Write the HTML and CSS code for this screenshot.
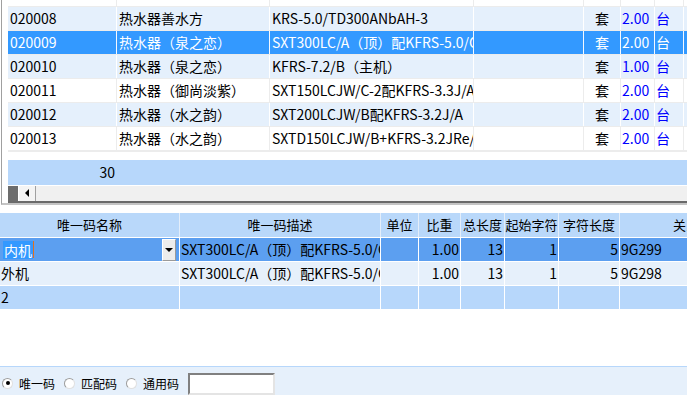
FILE: index.html
```html
<!DOCTYPE html>
<html lang="zh-CN">
<head>
    <meta charset="UTF-8">
    <title>唯一码</title>
    <link rel="stylesheet" href="styles.css">
</head>
<body>
    <div class="top-panel">
        <div class="grid-top">
            <div class="trow cut">
                <span></span><span></span><span></span><span></span><span></span><span></span><span></span><span></span>
            </div>
            <div class="trow alt">
                <span>020008</span><span>热水器善水方</span><span>KRS-5.0/TD300ANbAH-3</span><span></span>
                <span class="c">套</span><span class="num">2.00</span><span class="unit">台</span><span></span>
            </div>
            <div class="trow sel">
                <span>020009</span><span>热水器（泉之恋）</span><span>SXT300LC/A（顶）配KFRS-5.0/C</span><span></span>
                <span class="c">套</span><span class="num">2.00</span><span class="unit">台</span><span></span>
            </div>
            <div class="trow alt">
                <span>020010</span><span>热水器（泉之恋）</span><span>KFRS-7.2/B（主机）</span><span></span>
                <span class="c">套</span><span class="num">1.00</span><span class="unit">台</span><span></span>
            </div>
            <div class="trow">
                <span>020011</span><span>热水器（御尚淡紫）</span><span>SXT150LCJW/C-2配KFRS-3.3J/A-</span><span></span>
                <span class="c">套</span><span class="num">2.00</span><span class="unit">台</span><span></span>
            </div>
            <div class="trow alt">
                <span>020012</span><span>热水器（水之韵）</span><span>SXT200LCJW/B配KFRS-3.2J/A</span><span></span>
                <span class="c">套</span><span class="num">2.00</span><span class="unit">台</span><span></span>
            </div>
            <div class="trow">
                <span>020013</span><span>热水器（水之韵）</span><span>SXTD150LCJW/B+KFRS-3.2JRe/A</span><span></span>
                <span class="c">套</span><span class="num">2.00</span><span class="unit">台</span><span></span>
            </div>
        </div>
        <div class="blank"></div>
        <div class="total-row">
            <span class="total">30</span>
        </div>
        <div class="hscroll">
            <div class="thumb-dark"></div>
            <div class="arrow-btn"><span class="tri-left"></span></div>
            <div class="track"></div>
        </div>
    </div>

    <div class="grid-bottom">
        <div class="brow head">
            <span>唯一码名称</span><span>唯一码描述</span><span>单位</span><span>比重</span>
            <span>总长度</span><span>起始字符</span><span>字符长度</span><span class="last-head">关系</span>
        </div>
        <div class="brow cur">
            <span class="editor">
                <span class="picked">内机</span><span class="caret"></span>
                <span class="drop-btn"><span class="tri-down"></span></span>
            </span>
            <span>SXT300LC/A（顶）配KFRS-5.0/C</span><span></span><span class="r">1.00</span>
            <span class="r">13</span><span class="r">1</span><span class="r">5</span><span>9G299</span>
        </div>
        <div class="brow alt">
            <span>外机</span>
            <span>SXT300LC/A（顶）配KFRS-5.0/C</span><span></span><span class="r">1.00</span>
            <span class="r">13</span><span class="r">1</span><span class="r">5</span><span>9G298</span>
        </div>
        <div class="brow sum">
            <span>2</span><span></span><span></span><span></span><span></span><span></span><span></span><span></span>
        </div>
    </div>

    <div class="footer">
        <label class="opt"><span class="radio on"></span>唯一码</label>
        <label class="opt"><span class="radio"></span>匹配码</label>
        <label class="opt"><span class="radio"></span>通用码</label>
        <span class="search-box"></span>
    </div>
</body>
</html>
```

FILE: styles.css
```css
body {
    margin: 0;
    width: 687px;
    height: 395px;
    overflow: hidden;
    background: #fff;
    font-family: "Noto Sans CJK SC", "Noto Sans", sans-serif;
    font-size: 14px;
    color: #000;
    display: flex;
    flex-direction: column;
}

/* верхняя таблица */
.top-panel {
    margin-left: 1px;
    border-left: 1px solid #a0a0a0;
    border-bottom: 2px solid #c4c4c4;
    padding-left: 6px;
    height: 203px;
    display: flex;
    flex-direction: column;
    overflow: hidden;
}

.trow {
    display: grid;
    grid-template-columns: 109px 153px 204px 110px 37px 34px 29px 40px;
    height: 24px;
    border-bottom: 1px solid #ececec;
    box-sizing: border-box;
    background: #fff;
}

.trow span {
    border-right: 1px solid #ececec;
    padding-left: 2px;
    line-height: 23px;
    white-space: nowrap;
    overflow: hidden;
}

.trow.cut {
    height: 7px;
}

.trow.alt {
    background: #e5f0fc;
}

.trow.alt span {
    border-right-color: #fff;
}

.trow.sel {
    background: #3399ff;
    color: #fff;
}

.trow.sel span {
    border-right-color: #f4f8ff;
    color: #fff;
}

.trow .c {
    text-align: center;
    padding-left: 0;
}

.trow .num,
.trow .unit {
    color: #0000ff;
    padding-left: 1px;
}

.blank {
    height: 9px;
    border-top: 1px solid #ececec;
    box-sizing: border-box;
}

.total-row {
    height: 25px;
    background: #b7d7fb;
    display: flex;
}

.total {
    width: 107px;
    text-align: right;
    line-height: 25px;
}

.hscroll {
    height: 16px;
    border-top: 1px solid #fff;
    border-bottom: 2px solid #6a6a6a;
    display: flex;
    background: #f0f0f0;
}

.thumb-dark {
    width: 10px;
    background: #6d6d6d;
}

.arrow-btn {
    width: 16px;
    border-left: 1px solid #fff;
    border-right: 1px solid #a0a0a0;
    background: #f4f4f4;
    display: flex;
    align-items: center;
    justify-content: center;
}

.tri-left {
    width: 0;
    height: 0;
    border-top: 4px solid transparent;
    border-bottom: 4px solid transparent;
    border-right: 4px solid #000;
}

.track {
    flex: 1;
}

/* нижняя таблица */
.grid-bottom {
    margin-top: 8px;
    height: 153px;
    border-bottom: 1px solid #b7d7fb;
}

.brow {
    display: grid;
    grid-template-columns: 180px 201px 38px 42px 44px 54px 61px 80px;
    height: 24px;
    box-sizing: border-box;
    border-bottom: 1px solid #fff;
}

.brow > span {
    border-right: 1px solid #fff;
    padding-left: 1px;
    line-height: 23px;
    white-space: nowrap;
    overflow: hidden;
}

.brow .r {
    text-align: right;
    padding-right: 1px;
}

.brow.head {
    height: 25px;
    background: #b9d8fa;
    font-size: 13px;
}

.brow.head span {
    text-align: center;
    line-height: 24px;
    padding-left: 0;
    border-right-color: #e4eefa;
}

.brow.head .last-head {
    text-align: left;
    padding-left: 53px;
}

.brow.cur {
    background: #5c9ff0;
}

.brow.alt {
    background: #e6f0fb;
}

.brow.sum {
    background: #b7d7fb;
}

.editor {
    display: flex;
    align-items: center;
    padding-left: 3px !important;
}

.picked {
    background: #3399ff;
    color: #fff;
    line-height: 18px;
    padding: 0 1px;
}

.caret {
    width: 1px;
    height: 17px;
    background: #e07020;
}

.drop-btn {
    margin-left: auto;
    margin-right: 3px;
    width: 14px;
    height: 22px;
    background: #ececec;
    border: 1px solid #fff;
    border-right-color: #9a9a9a;
    border-bottom-color: #9a9a9a;
    box-sizing: border-box;
    display: flex;
    align-items: center;
    justify-content: center;
}

.tri-down {
    width: 0;
    height: 0;
    border-left: 4px solid transparent;
    border-right: 4px solid transparent;
    border-top: 4px solid #000;
}

/* нижняя панель */
.footer {
    flex: 1;
    background: #e6f0fb;
    display: flex;
    align-items: center;
    padding-left: 2px;
    padding-top: 4px;
    font-size: 12px;
}

.opt {
    display: flex;
    align-items: center;
    margin-right: 9px;
}

.radio {
    width: 11px;
    height: 11px;
    border-radius: 50%;
    border: 1px solid #9c9c9c;
    border-right-color: #e0e0e0;
    border-bottom-color: #e0e0e0;
    background: #fff;
    box-sizing: border-box;
    margin-right: 6px;
    display: flex;
    align-items: center;
    justify-content: center;
}

.radio.on::after {
    content: "";
    width: 4px;
    height: 4px;
    border-radius: 50%;
    background: #000;
}

.search-box {
    width: 87px;
    height: 22px;
    background: #fff;
    border: 2px solid #808080;
    border-right-color: #e4e4e4;
    border-bottom-color: #e4e4e4;
    box-sizing: border-box;
    align-self: flex-end;
}
```
